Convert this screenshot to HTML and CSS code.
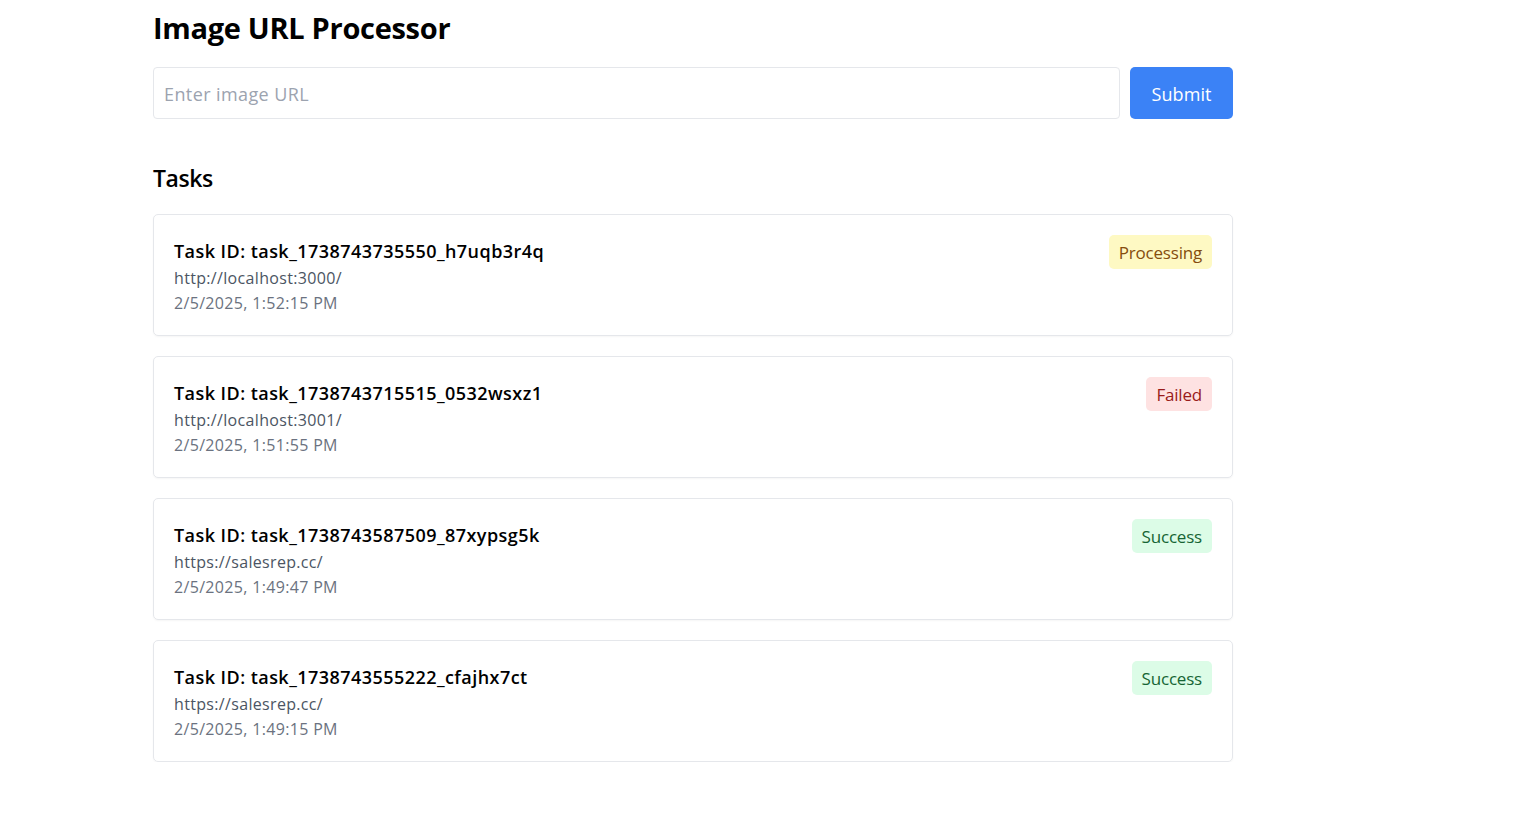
FILE: index.html
```html
<!DOCTYPE html>
<html lang="en">
<head>
<meta charset="utf-8">
<title>Image URL Processor</title>
<link rel="stylesheet" href="styles.css">
</head>
<body>
<main class="container">
  <h1 class="title">Image URL Processor</h1>
  <form class="url-form">
    <input class="url-input" type="text" placeholder="Enter image URL">
    <button class="submit-btn" type="button">Submit</button>
  </form>
  <h2 class="section-title">Tasks</h2>
  <ul class="task-list">
    <li class="task-card">
      <div class="task-info">
        <div class="task-id">Task ID: task_1738743735550_h7uqb3r4q</div>
        <div class="task-url">http://localhost:3000/</div>
        <div class="task-date">2/5/2025, 1:52:15 PM</div>
      </div>
      <span class="badge badge-processing">Processing</span>
    </li>
    <li class="task-card">
      <div class="task-info">
        <div class="task-id">Task ID: task_1738743715515_0532wsxz1</div>
        <div class="task-url">http://localhost:3001/</div>
        <div class="task-date">2/5/2025, 1:51:55 PM</div>
      </div>
      <span class="badge badge-failed">Failed</span>
    </li>
    <li class="task-card">
      <div class="task-info">
        <div class="task-id">Task ID: task_1738743587509_87xypsg5k</div>
        <div class="task-url">https://salesrep.cc/</div>
        <div class="task-date">2/5/2025, 1:49:47 PM</div>
      </div>
      <span class="badge badge-success">Success</span>
    </li>
    <li class="task-card">
      <div class="task-info">
        <div class="task-id">Task ID: task_1738743555222_cfajhx7ct</div>
        <div class="task-url">https://salesrep.cc/</div>
        <div class="task-date">2/5/2025, 1:49:15 PM</div>
      </div>
      <span class="badge badge-success">Success</span>
    </li>
  </ul>
</main>
</body>
</html>
```
FILE: styles.css
```css
* { box-sizing: border-box; }
html, body {
  margin: 0;
  padding: 0;
  background: #ffffff;
  color: #000000;
  font-family: "Open Sans", "Noto Sans", "Liberation Sans", sans-serif;
}
.container {
  width: 1080px;
  margin-left: 153px;
  padding-top: 10px;
}
.title {
  margin: 0 0 21px 0;
  font-size: 29px;
  line-height: 36px;
  font-weight: 700;
  letter-spacing: -0.3px;
}
.url-form {
  display: flex;
  gap: 10px;
  margin: 0 0 43px 0;
}
.url-input {
  flex: 1;
  height: 52px;
  padding: 1px 10px 0 10px;
  border: 1px solid #e5e7eb;
  border-radius: 4px;
  font-family: inherit;
  font-size: 18px;
  letter-spacing: 0.4px;
  color: #111827;
  outline: none;
}
.url-input::placeholder { color: #9ca3af; }
.submit-btn {
  width: 103px;
  height: 52px;
  padding: 1px 0 0 0;
  border: none;
  border-radius: 5px;
  background: #3b82f6;
  color: #ffffff;
  font-family: inherit;
  font-size: 18px;
  letter-spacing: 0.1px;
  cursor: pointer;
}
.section-title {
  margin: 0 0 20px 0;
  font-size: 23px;
  line-height: 32px;
  font-weight: 600;
  letter-spacing: -0.4px;
}
.task-list {
  list-style: none;
  margin: 0;
  padding: 0;
  display: flex;
  flex-direction: column;
  gap: 20px;
}
.task-card {
  display: flex;
  justify-content: space-between;
  align-items: flex-start;
  padding: 20px;
  border: 1px solid #e5e7eb;
  border-radius: 5px;
  box-shadow: 0 1px 2px rgba(0, 0, 0, 0.04);
}
.task-id {
  font-size: 18px;
  line-height: 28px;
  font-weight: 600;
  letter-spacing: 0.45px;
  padding-top: 2px;
  margin-bottom: 1px;
}
.task-url {
  font-size: 16px;
  line-height: 25px;
  color: #4b5563;
  letter-spacing: 0.33px;
}
.task-date {
  font-size: 16px;
  line-height: 24px;
  color: #6b7280;
  letter-spacing: 0.33px;
}
.badge {
  display: inline-block;
  padding: 4px 10px 2px 10px;
  font-size: 17px;
  line-height: 28px;
  border-radius: 5px;
  letter-spacing: -0.2px;
}
.badge-processing { background: #fef9c3; color: #854d0e; }
.badge-failed { background: #fee2e2; color: #991b1b; }
.badge-success { background: #dcfce7; color: #166534; }
```
